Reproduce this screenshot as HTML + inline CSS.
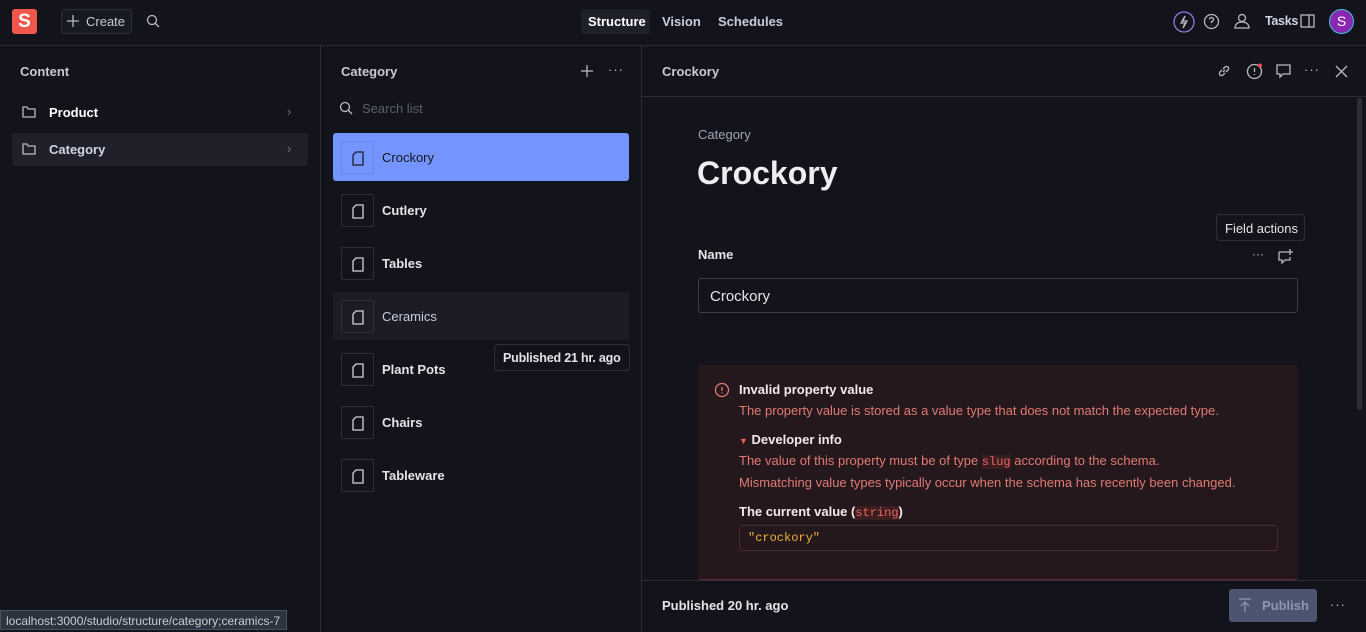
<!DOCTYPE html>
<html><head><meta charset="utf-8"><style>
*{box-sizing:border-box;margin:0;padding:0}
body{width:1366px;height:632px;overflow:hidden;background:#13141b;font-family:"Liberation Sans",sans-serif;color:#e3e4e8;position:relative;font-size:13px}
.a{position:absolute;white-space:nowrap}
.b{font-weight:bold}
svg{position:absolute;fill:none;stroke:#b8bac4;stroke-width:1.3}
.item{position:absolute;left:333px;width:296px;height:48px;border-radius:3px}
.ic{position:absolute;left:8px;top:8px;width:33px;height:33px;border:1px solid #2c2e3a;border-radius:2px}
.ic svg{left:10px;top:9px}
.lbl{position:absolute;left:49px;top:17px;font-weight:bold;font-size:13px;color:#e3e4e8}
.red{color:#e07a73}
.mono{font-family:"Liberation Mono",monospace;color:#f0625a;background:#3a1e22;font-size:12px}
</style></head><body>
<div class="a" style="left:0;top:0;width:1366px;height:46px;border-bottom:1px solid #2a2c38;background:#13141b"></div>
<div class="a b" style="left:12px;top:9px;width:25px;height:25px;background:#f0564a;border-radius:3px;color:#fff;font-size:19px;text-align:center;line-height:25px">S</div>
<div class="a" style="left:61px;top:9px;width:71px;height:25px;border:1px solid #2c2e3a;border-radius:3px;background:#181a22;color:#c8cad2;font-size:13px;line-height:23px;padding-left:24px">Create</div>
<svg style="left:66px;top:14px" width="14" height="14"><path d="M7 1v12M1 7h12"/></svg>
<svg style="left:146px;top:14px" width="14" height="14"><circle cx="6" cy="6" r="4.5"/><path d="M9.5 9.5l3.5 3.5"/></svg>
<div class="a" style="left:581px;top:9px;width:69px;height:25px;background:#1e2029;border-radius:3px"></div>
<div class="a b" style="left:588px;top:14px;color:#fff">Structure</div>
<div class="a b" style="left:662px;top:14px;color:#c8cce0">Vision</div>
<div class="a b" style="left:718px;top:14px;color:#c8cce0">Schedules</div>
<svg style="left:1173px;top:11px" width="22" height="22"><circle cx="11" cy="11" r="10" stroke="#9b7ae8"/><path d="M12 5l-4 7h4l-2 5 4-7h-4z" stroke="#b8bac4"/></svg>
<svg style="left:1203px;top:13px" width="17" height="17"><circle cx="8.5" cy="8.5" r="7"/><path d="M6.5 6.5a2 2 0 1 1 2 2v1.5M8.5 12v.5"/></svg>
<svg style="left:1233px;top:12px" width="18" height="18"><circle cx="9" cy="6" r="3.5"/><path d="M2 16c0-4 3-6 7-6s7 2 7 6z"/></svg>
<div class="a b" style="left:1265px;top:14px;color:#d0d4e4;font-size:12.5px;letter-spacing:-0.3px">Tasks</div>
<svg style="left:1300px;top:14px" width="15" height="14"><rect x="1" y="1" width="13" height="12"/><path d="M9 1v12"/></svg>
<div class="a" style="left:1329px;top:9px;width:25px;height:25px;border-radius:50%;background:#8a27b0;border:1px solid #3dc6d6;color:#fff;text-align:center;line-height:23px;font-size:14px">S</div>
<div class="a" style="left:320px;top:46px;width:1px;height:586px;background:#2a2c38"></div>
<div class="a" style="left:641px;top:46px;width:1px;height:586px;background:#2a2c38"></div>
<div class="a b" style="left:20px;top:64px;color:#c8cad2">Content</div>
<svg style="left:22px;top:105px" width="14" height="13"><path d="M1 2h4l1 2h7v8H1z"/></svg>
<div class="a b" style="left:49px;top:105px;color:#fff">Product</div>
<div class="a" style="left:287px;top:104px;color:#70737e">›</div>
<div class="a" style="left:12px;top:133px;width:296px;height:33px;background:#1f2029;border-radius:3px"></div>
<svg style="left:22px;top:142px" width="14" height="13"><path d="M1 2h4l1 2h7v8H1z"/></svg>
<div class="a b" style="left:49px;top:142px;color:#d0d4e4">Category</div>
<div class="a" style="left:287px;top:141px;color:#70737e">›</div>
<div class="a b" style="left:341px;top:64px;color:#c8cad2">Category</div>
<svg style="left:580px;top:64px" width="14" height="14"><path d="M7 1v12M1 7h12"/></svg>
<div class="a" style="left:608px;top:62px;color:#b8bac4;letter-spacing:1px">···</div>
<svg style="left:339px;top:101px" width="14" height="14"><circle cx="6" cy="6" r="4.5"/><path d="M9.5 9.5l3.5 3.5"/></svg>
<div class="a" style="left:362px;top:101px;color:#5c5f6c">Search list</div>
<div class="item" style="top:133px;background:#7494ff"><div class="ic" style="border-color:#6a86e8"><svg width="12" height="15" style="stroke:#1a1c26"><path d="M4 1h7v13H1V4z"/></svg></div><div class="lbl" style="color:#14161e;font-weight:normal">Crockory</div></div>
<div class="item" style="top:186px"><div class="ic"><svg width="12" height="15" style="stroke:#d0d2da"><path d="M4 1h7v13H1V4z"/></svg></div><div class="lbl">Cutlery</div></div>
<div class="item" style="top:239px"><div class="ic"><svg width="12" height="15" style="stroke:#d0d2da"><path d="M4 1h7v13H1V4z"/></svg></div><div class="lbl">Tables</div></div>
<div class="item" style="top:292px;background:#1b1c24"><div class="ic"><svg width="12" height="15" style="stroke:#d0d2da"><path d="M4 1h7v13H1V4z"/></svg></div><div class="lbl" style="color:#c8cce0;font-weight:normal">Ceramics</div></div>
<div class="item" style="top:345px"><div class="ic"><svg width="12" height="15" style="stroke:#d0d2da"><path d="M4 1h7v13H1V4z"/></svg></div><div class="lbl">Plant Pots</div></div>
<div class="item" style="top:398px"><div class="ic"><svg width="12" height="15" style="stroke:#d0d2da"><path d="M4 1h7v13H1V4z"/></svg></div><div class="lbl">Chairs</div></div>
<div class="item" style="top:451px"><div class="ic"><svg width="12" height="15" style="stroke:#d0d2da"><path d="M4 1h7v13H1V4z"/></svg></div><div class="lbl">Tableware</div></div>
<div class="a b" style="left:494px;top:344px;width:136px;height:27px;background:#13141b;border:1px solid #2c2e3a;border-radius:4px;padding:6px 0 0 8px;color:#e3e4e8;font-size:12.5px;letter-spacing:-0.2px">Published 21 hr. ago</div>
<div class="a" style="left:642px;top:96px;width:724px;height:1px;background:#2a2c38"></div>
<div class="a b" style="left:662px;top:64px;color:#c8cad2">Crockory</div>
<svg style="left:1217px;top:64px" width="14" height="14"><path d="M6 8l2-2M5 6l-2 2a2 2 0 0 0 3 3l2-2M9 8l2-2a2 2 0 0 0-3-3L6 5"/></svg>
<svg style="left:1246px;top:62px" width="18" height="18"><circle cx="8.5" cy="9.5" r="7"/><path d="M8.5 6v4M8.5 12v1"/><circle cx="14" cy="3.5" r="2" fill="#f04a4a" stroke="none"/></svg>
<svg style="left:1276px;top:64px" width="15" height="15"><path d="M1 1h13v9H7l-3 3v-3H1z"/></svg>
<div class="a" style="left:1304px;top:62px;color:#b8bac4;letter-spacing:1px">···</div>
<svg style="left:1335px;top:65px" width="13" height="13"><path d="M1 1l11 11M12 1L1 12"/></svg>
<div class="a" style="left:1357px;top:98px;width:5px;height:312px;background:#2c2e3a;border-radius:3px"></div>
<div class="a" style="left:698px;top:127px;color:#a0a4b8">Category</div>
<div class="a b" style="left:697px;top:155px;font-size:32px;color:#eceef2">Crockory</div>
<div class="a" style="left:1216px;top:214px;width:89px;height:27px;border:1px solid #2c2e3a;border-radius:4px;background:#13141b;padding:6px 0 0 8px;color:#e3e4e8">Field actions</div>
<div class="a b" style="left:698px;top:247px">Name</div>
<div class="a" style="left:1252px;top:247px;color:#b8bac4;font-size:12px">···</div>
<svg style="left:1278px;top:248px" width="16" height="16"><path d="M1 4h8M1 4v8h3v3l3-3h5V9M12 1v6M9 4h6"/></svg>
<div class="a" style="left:698px;top:278px;width:600px;height:35px;border:1px solid #3a3c4a;border-radius:3px;padding:9px 0 0 11px;font-size:15px">Crockory</div>
<div class="a" style="left:698px;top:365px;width:600px;height:215px;background:#25181d;border-radius:3px;border-bottom:1px solid #6a2a2c"></div>
<svg style="left:714px;top:382px" width="16" height="16"><circle cx="8" cy="8" r="6.5" stroke="#e07a73"/><path d="M8 5v4M8 10.5v1" stroke="#e07a73"/></svg>
<div class="a b" style="left:739px;top:382px;color:#f4e8e8">Invalid property value</div>
<div class="a red" style="left:739px;top:403px">The property value is stored as a value type that does not match the expected type.</div>
<div class="a b" style="left:739px;top:432px;color:#f4e8e8"><span style="color:#e85a50;font-size:9px">▼</span> Developer info</div>
<div class="a red" style="left:739px;top:453px">The value of this property must be of type <span class="mono">slug</span> according to the schema.</div>
<div class="a red" style="left:739px;top:475px">Mismatching value types typically occur when the schema has recently been changed.</div>
<div class="a b" style="left:739px;top:504px;color:#f4e8e8">The current value (<span class="mono" style="font-weight:normal">string</span>)</div>
<div class="a" style="left:739px;top:525px;width:539px;height:26px;border:1px solid #4a2a2e;border-radius:3px;padding:5px 0 0 8px;font-family:'Liberation Mono',monospace;font-size:12px;color:#f0b43c">"crockory"</div>
<div class="a" style="left:642px;top:580px;width:724px;height:52px;background:#13141b;border-top:1px solid #2a2c38"></div>
<div class="a b" style="left:662px;top:598px">Published 20 hr. ago</div>
<div class="a b" style="left:1229px;top:589px;width:88px;height:33px;background:#4d5470;border-radius:3px;color:#8f96b0;padding:9px 0 0 33px">Publish</div>
<svg style="left:1238px;top:598px" width="14" height="14"><path d="M1 1h12M7 4v10M3 8l4-4 4 4" stroke="#8f96b0"/></svg>
<div class="a" style="left:1330px;top:597px;color:#b8bac4;letter-spacing:1px">···</div>
<div class="a" style="left:0;top:610px;width:287px;height:20px;background:#2c3440;border:1px solid #4a5060;color:#c8cad2;font-size:12px;padding:3px 0 0 5px">localhost:3000/studio/structure/category;ceramics-7</div>
</body></html>
